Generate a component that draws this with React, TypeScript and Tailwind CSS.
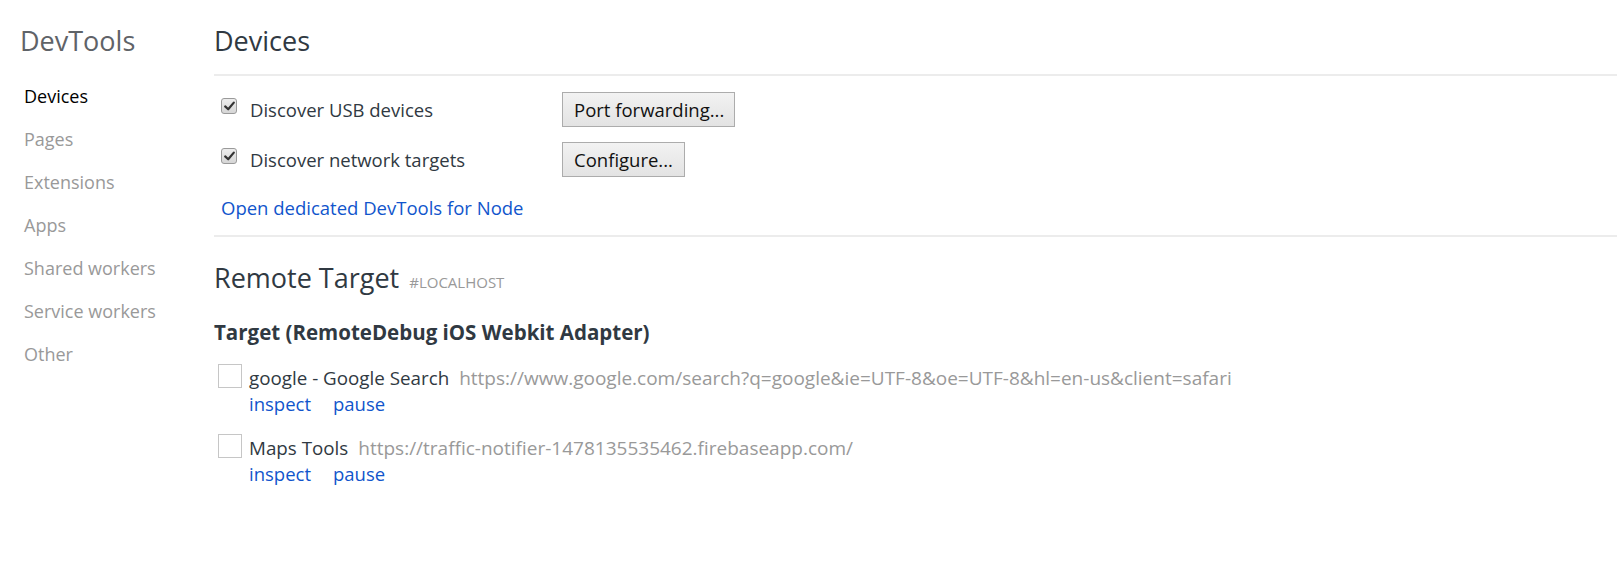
import React from 'react'

const navItems = ['Devices', 'Pages', 'Extensions', 'Apps', 'Shared workers', 'Service workers', 'Other']

const targets = [
  {
    title: 'google - Google Search',
    url: 'https://www.google.com/search?q=google&ie=UTF-8&oe=UTF-8&hl=en-us&client=safari',
  },
  {
    title: 'Maps Tools',
    url: 'https://traffic-notifier-1478135535462.firebaseapp.com/',
  },
]

function CheckedBox() {
  return (
    <span className="flex h-[16px] w-[16px] items-center justify-center rounded-[3px] border border-[#9a9a9a] bg-gradient-to-b from-[#ededed] to-[#d6d6d6]">
      <svg width="11" height="10" viewBox="0 0 11 10">
        <path d="M1.2 5.4 L4.2 8.3 L9.8 1.6" fill="none" stroke="#333" strokeWidth="2.2" strokeLinecap="round" strokeLinejoin="round" />
      </svg>
    </span>
  )
}

function Button({ label, width }: { label: string; width: string }) {
  return (
    <button
      className={`h-[35px] ${width} border border-[#acacac] bg-gradient-to-b from-[#f2f2f2] to-[#e3e3e3] pl-[11px] text-left text-[18.5px] leading-[33px] text-[#111]`}
    >
      {label}
    </button>
  )
}

export default function App() {
  return (
    <div className="flex min-h-[573px] bg-white font-['Open_Sans',sans-serif] text-[#303942]">
      {/* Sidebar */}
      <nav className="w-[214px] shrink-0 pl-[20px] pt-[23px]">
        <h1 className="h-[36px] text-[27px] leading-[36px] text-[#5f6368]">DevTools</h1>
        <ul className="mt-[16px] pl-[4px]">
          {navItems.map((item, i) => (
            <li
              key={item}
              className={`h-[43px] text-[18px] leading-[43px] ${i === 0 ? 'text-black' : 'text-[#999]'}`}
            >
              {item}
            </li>
          ))}
        </ul>
      </nav>

      {/* Main */}
      <main className="flex-1 pt-[23px]">
        <h2 className="h-[36px] text-[27px] leading-[36px] text-[#303942]">Devices</h2>
        <div className="mt-[15px] border-t-2 border-[#ececec]" />

        <div className="mt-[16px] flex flex-col gap-[15px] pl-[7px]">
          <div className="flex h-[35px] items-center">
            <label className="flex w-[341px] items-center">
              <span className="-mt-[7px]">
                <CheckedBox />
              </span>
              <span className="ml-[13px] text-[18.5px] text-[#303942]">Discover USB devices</span>
            </label>
            <Button label="Port forwarding..." width="w-[173px]" />
          </div>
          <div className="flex h-[35px] items-center">
            <label className="flex w-[341px] items-center">
              <span className="-mt-[7px]">
                <CheckedBox />
              </span>
              <span className="ml-[13px] text-[18.5px] text-[#303942]">Discover network targets</span>
            </label>
            <Button label="Configure..." width="w-[123px]" />
          </div>
        </div>

        <a className="mt-[19px] block pl-[7px] text-[18.5px] leading-[24px] text-[#1155cc]">
          Open dedicated DevTools for Node
        </a>

        <div className="mt-[15px] border-t-2 border-[#ececec]" />

        <div className="mt-[23px] flex h-[36px] items-baseline">
          <h2 className="text-[27px] leading-[36px] text-[#303942]">Remote Target</h2>
          <span className="ml-[10px] text-[15px] uppercase text-[#999]">#localhost</span>
        </div>

        <h3 className="mt-[24px] text-[20.5px] font-bold leading-[24px] text-[#303942]">
          Target (RemoteDebug iOS Webkit Adapter)
        </h3>

        <div className="mt-[21px] flex flex-col gap-[18px] pl-[4px]">
          {targets.map((t) => (
            <div key={t.title} className="flex">
              <span className="mt-[-1px] h-[24px] w-[24px] shrink-0 border border-[#c6c6c6] bg-white" />
              <div className="ml-[7px] flex flex-col">
                <div className="flex h-[26px] items-baseline leading-[26px]">
                  <span className="text-[18.8px] text-[#303942]">{t.title}</span>
                  <span className="ml-[10px] text-[19px] text-[#999]">{t.url}</span>
                </div>
                <div className="flex h-[26px] gap-[22px] text-[18.5px] leading-[26px] text-[#1155cc]">
                  <a>inspect</a>
                  <a>pause</a>
                </div>
              </div>
            </div>
          ))}
        </div>
      </main>
    </div>
  )
}
